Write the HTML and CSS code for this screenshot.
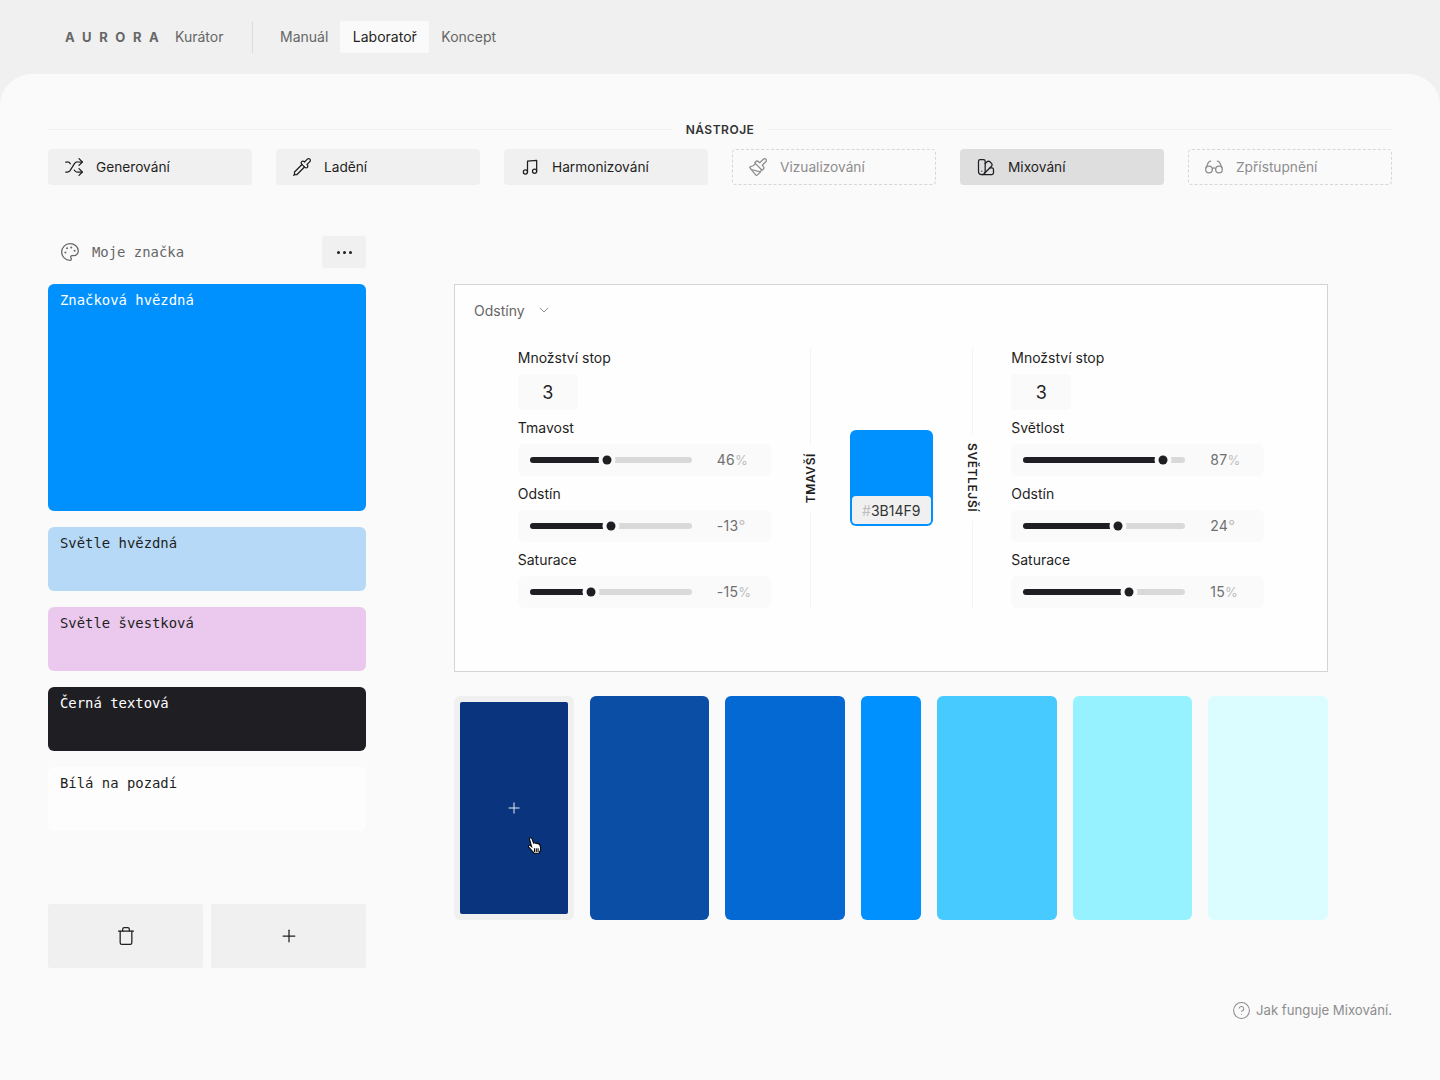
FILE: index.html
```html
<!DOCTYPE html>
<html lang="cs">
<head>
  <meta charset="UTF-8">
  <title>Aurora Kurátor - Mixování</title>
  <link rel="stylesheet" href="styles.css">
</head>
<body>

<header class="topbar">
  <span class="logo">AURORA</span>
  <span class="logo-sub">Kurátor</span>
  <span class="topbar-sep"></span>
  <nav class="nav">
    <a class="nav-item">Manuál</a>
    <a class="nav-item active">Laboratoř</a>
    <a class="nav-item">Koncept</a>
  </nav>
</header>

<main class="main">
  <div class="section-title"><span class="section-line"></span><h2>NÁSTROJE</h2><span class="section-line"></span></div>

  <div class="tools">
    <button class="tool">
      <svg class="icon" viewBox="0 0 24 24"><path d="m18 14 4 4-4 4"/><path d="m18 2 4 4-4 4"/><path d="M2 18h1.973a4 4 0 0 0 3.3-1.7l5.454-8.6a4 4 0 0 1 3.3-1.7H22"/><path d="M2 6h1.972a4 4 0 0 1 3.6 2.2"/><path d="M22 18h-6.041a4 4 0 0 1-3.3-1.8l-.359-.45"/></svg>
      Generování
    </button>
    <button class="tool">
      <svg class="icon" viewBox="0 0 24 24"><path d="m2 22 1-1h3l9-9"/><path d="M3 21v-3l9-9"/><path d="m15 6 3.4-3.4a2.1 2.1 0 1 1 3 3L18 9l.4.4a2.1 2.1 0 1 1-3 3l-3.8-3.8a2.1 2.1 0 1 1 3-3l.4.4Z"/></svg>
      Ladění
    </button>
    <button class="tool">
      <svg class="icon" viewBox="0 0 24 24"><path d="M9 18V5l11-1v13"/><circle cx="6.5" cy="18" r="2.5"/><circle cx="17.5" cy="17" r="2.5"/></svg>
      Harmonizování
    </button>
    <button class="tool disabled">
      <svg class="icon" viewBox="0 0 24 24"><path d="m14.622 17.897-10.68-2.913"/><path d="M18.376 2.622a1 1 0 1 1 3.002 3.002L17.36 9.643a.5.5 0 0 0 0 .707l.944.944a2.41 2.41 0 0 1 0 3.408l-.944.944a.5.5 0 0 1-.707 0L8.354 7.348a.5.5 0 0 1 0-.707l.944-.944a2.41 2.41 0 0 1 3.408 0l.944.944a.5.5 0 0 0 .707 0z"/><path d="M9 8c-1.804 2.71-3.97 3.46-6.583 3.948a.507.507 0 0 0-.302.819l7.32 8.883a1 1 0 0 0 1.185.204C12.735 20.405 16 16.792 16 15"/></svg>
      Vizualizování
    </button>
    <button class="tool selected">
      <svg class="icon" viewBox="0 0 24 24"><path d="M11 17a4 4 0 0 1-8 0V5a2 2 0 0 1 2-2h4a2 2 0 0 1 2 2Z"/><path d="M16.7 13H19a2 2 0 0 1 2 2v4a2 2 0 0 1-2 2H7"/><path d="M7 17h.01"/><path d="m11 8 2.3-2.3a2.4 2.4 0 0 1 3.404.004L18.6 7.6a2.4 2.4 0 0 1 .026 3.434L9.9 19.8"/></svg>
      Mixování
    </button>
    <button class="tool disabled">
      <svg class="icon" viewBox="0 0 24 24"><circle cx="6" cy="15" r="4"/><circle cx="18" cy="15" r="4"/><path d="M14 15a2 2 0 0 0-2-2 2 2 0 0 0-2 2"/><path d="M2.5 13 5 7c.7-1.3 1.4-2 3-2"/><path d="M21.5 13 19 7c-.7-1.3-1.5-2-3-2"/></svg>
      Zpřístupnění
    </button>
  </div>

  <div class="workspace">
    <aside class="brand">
      <div class="brand-head">
        <svg class="icon brand-icon" viewBox="0 0 24 24"><circle class="dot" cx="13.5" cy="6.5" r=".5"/><circle class="dot" cx="17.5" cy="10.5" r=".5"/><circle class="dot" cx="8.5" cy="7.5" r=".5"/><circle class="dot" cx="6.5" cy="12.5" r=".5"/><path d="M12 2C6.5 2 2 6.5 2 12s4.5 10 10 10c.926 0 1.648-.746 1.648-1.688 0-.437-.18-.835-.437-1.125-.29-.289-.438-.652-.438-1.125a1.64 1.64 0 0 1 1.668-1.668h1.996c3.051 0 5.555-2.503 5.555-5.554C21.965 6.012 17.461 2 12 2z"/></svg>
        <span class="brand-name">Moje značka</span>
        <button class="more"><i></i><i></i><i></i></button>
      </div>

      <div class="color-card big card-star">Značková hvězdná</div>
      <div class="color-card card-light">Světle hvězdná</div>
      <div class="color-card card-plum">Světle švestková</div>
      <div class="color-card card-black">Černá textová</div>
      <div class="color-card card-white">Bílá na pozadí</div>

      <div class="brand-actions">
        <button class="action">
          <svg class="icon" viewBox="0 0 24 24"><path d="M3 6h18"/><path d="M19 6v14c0 1-1 2-2 2H7c-1 0-2-1-2-2V6"/><path d="M8 6V4c0-1 1-2 2-2h4c1 0 2 1 2 2v2"/></svg>
        </button>
        <button class="action">
          <svg class="icon" viewBox="0 0 24 24"><path d="M5 12h14"/><path d="M12 5v14"/></svg>
        </button>
      </div>
    </aside>

    <section class="mixer">
      <div class="panel">
        <div class="panel-head">
          Odstíny
          <svg class="chevron" viewBox="0 0 24 24"><path d="m6 9 6 6 6-6"/></svg>
        </div>

        <div class="panel-body">
          <div class="group">
            <div class="field-label">Množství stop</div>
            <div class="stepper">3</div>
            <div class="field-label">Tmavost</div>
            <div class="slider">
              <div class="track"><div class="fill" style="width:47.5%"></div><div class="thumb" style="left:47.5%"></div></div>
              <span class="value">46<em>%</em></span>
            </div>
            <div class="field-label">Odstín</div>
            <div class="slider">
              <div class="track"><div class="fill" style="width:50%"></div><div class="thumb" style="left:50%"></div></div>
              <span class="value">-13<em class="deg">°</em></span>
            </div>
            <div class="field-label">Saturace</div>
            <div class="slider">
              <div class="track"><div class="fill" style="width:37.6%"></div><div class="thumb" style="left:37.6%"></div></div>
              <span class="value">-15<em>%</em></span>
            </div>
          </div>

          <div class="divider">
            <span class="divider-line"></span>
            <span class="divider-label flip">TMAVŠÍ</span>
            <span class="divider-line"></span>
          </div>

          <div class="base">
            <div class="base-hex"><em>#</em>3B14F9</div>
          </div>

          <div class="divider after-base">
            <span class="divider-line"></span>
            <span class="divider-label">SVĚTLEJŠÍ</span>
            <span class="divider-line"></span>
          </div>

          <div class="group">
            <div class="field-label">Množství stop</div>
            <div class="stepper">3</div>
            <div class="field-label">Světlost</div>
            <div class="slider">
              <div class="track"><div class="fill" style="width:86.5%"></div><div class="thumb" style="left:86.5%"></div></div>
              <span class="value">87<em>%</em></span>
            </div>
            <div class="field-label">Odstín</div>
            <div class="slider">
              <div class="track"><div class="fill" style="width:58.2%"></div><div class="thumb" style="left:58.2%"></div></div>
              <span class="value">24<em class="deg">°</em></span>
            </div>
            <div class="field-label">Saturace</div>
            <div class="slider">
              <div class="track"><div class="fill" style="width:65.5%"></div><div class="thumb" style="left:65.5%"></div></div>
              <span class="value">15<em>%</em></span>
            </div>
          </div>
        </div>
      </div>

      <div class="shades">
        <div class="shade hovered">
          <div class="shade-inner">
            <svg class="shade-plus" viewBox="0 0 12 12"><path d="M.5 6h11"/><path d="M6 .5v11"/></svg>
            <svg class="cursor" viewBox="0 0 15 16"><path d="M3 .8c.7-.3 1.300 0 1.600.7l1.600 4.200c.5-.4 1.200-.3 1.500.2.5-.4 1.200-.2 1.500.3.5-.3 1.200-.1 1.500.4.5-.2 1 0 1.200.5l.8 2.500c.5 1.800 0 3.400-1 4.500l-.3 1.200H6.400l-.5-1L1.600 9.500c-.5-.6-.4-1.300.1-1.600.5-.3 1.100-.2 1.500.2l1.100 1L2.400 2.300c-.2-.6 0-1.200.6-1.500z"/><path class="cursor-lines" d="M7 10.500v3.500M8.700 10.500v3.500M10.400 10.500v3.500"/></svg>
          </div>
        </div>
        <div class="shade s2"></div>
        <div class="shade s3"></div>
        <div class="shade base-shade"></div>
        <div class="shade s5"></div>
        <div class="shade s6"></div>
        <div class="shade s7"></div>
      </div>
    </section>
  </div>

  <div class="help">
    <svg class="icon help-icon" viewBox="0 0 24 24"><circle cx="12" cy="12" r="10"/><path d="M9.090 9a3 3 0 0 1 5.830 1c0 2-3 3-3 3"/><path d="M12 17h.01"/></svg>
    Jak funguje Mixování.
  </div>
</main>

</body>
</html>
```

FILE: styles.css
```css
* {
  box-sizing: border-box;
}
html, body {
  height: 100%;
}
body {
  margin: 0;
  display: flex;
  flex-direction: column;
  background: #f0f0f0;
  color: #1f1f23;
  font-family: Inter, "Noto Sans", sans-serif;
  font-size: 14px;
}
button {
  font: inherit;
  color: inherit;
  border: none;
  cursor: pointer;
}
em {
  font-style: normal;
}
.icon {
  width: 20px;
  height: 20px;
  flex: none;
  fill: none;
  stroke: currentColor;
  stroke-width: 1.5;
  stroke-linecap: round;
  stroke-linejoin: round;
}

/* top bar */
.topbar {
  height: 74px;
  flex: none;
  display: flex;
  align-items: center;
  padding-left: 65px;
}
.logo {
  width: 110px;
  line-height: 32px;
  font-size: 13px;
  font-weight: 700;
  letter-spacing: 7.6px;
  color: #666;
}
.logo-sub {
  color: #666;
  width: 77px;
  line-height: 32px;
}
.topbar-sep {
  width: 1px;
  height: 32px;
  background: #dcdcdc;
  margin-right: 15px;
}
.nav {
  display: flex;
}
.nav-item {
  height: 32px;
  line-height: 32px;
  padding: 0 12px;
  border-radius: 2px;
  color: #666;
}
.nav-item.active {
  width: 89px;
  background: #fafafa;
  color: #1f1f23;
  text-align: center;
}

/* main sheet */
.main {
  flex: 1;
  background: #fafafa;
  border-radius: 32px 32px 0 0;
  padding: 47px 48px 0;
}
.section-title {
  display: flex;
  align-items: center;
  height: 16px;
}
.section-title h2 {
  margin: 0;
  padding: 0 14px;
  font-size: 12px;
  font-weight: 600;
  letter-spacing: .5px;
  color: #333;
}
.section-line {
  flex: 1;
  height: 1px;
  background: #f0f0f0;
}
.tools {
  display: grid;
  grid-template-columns: repeat(6, 1fr);
  gap: 24px;
  margin-top: 12px;
}
.tool {
  height: 36px;
  display: flex;
  align-items: center;
  gap: 12px;
  padding: 0 16px;
  background: #f0f0f0;
  border-radius: 4px;
  font-size: 13.7px;
  text-align: left;
}
.tool.selected {
  background: #dedede;
}
.tool.disabled {
  padding-left: 15px;
  background: none;
  border: 1px dashed #d6d6d6;
  color: #8d8d8d;
}

.workspace {
  display: flex;
  gap: 88px;
  margin-top: 51px;
}

/* brand colours */
.brand {
  width: 318px;
  flex: none;
}
.brand-head {
  display: flex;
  align-items: center;
  height: 32px;
  padding-left: 12px;
  margin-bottom: 16px;
  color: #666;
}
.brand-name {
  flex: 1;
  margin-left: 12px;
  font-family: "DejaVu Sans Mono", "Liberation Mono", monospace;
  font-size: 13.9px;
}
.more {
  width: 44px;
  height: 32px;
  display: flex;
  align-items: center;
  justify-content: center;
  gap: 3px;
  background: #f0f0f0;
  border-radius: 2px;
}
.more i {
  width: 3px;
  height: 3px;
  border-radius: 50%;
  background: #1f1f23;
}
.dot {
  fill: currentColor;
}
.color-card {
  height: 64px;
  margin-bottom: 16px;
  padding: 7px 12px;
  border-radius: 6px;
  font-family: "DejaVu Sans Mono", "Liberation Mono", monospace;
  font-size: 13.9px;
  line-height: 18px;
}
.color-card.big {
  height: 227px;
}
.card-star {
  background: #0091ff;
  color: #fff;
}
.card-light {
  background: #b5d9f7;
}
.card-plum {
  background: #ebc9ee;
}
.card-black {
  background: #1f1f23;
  color: #fff;
}
.card-white {
  background: #fdfdfd;
}
.brand-actions {
  display: flex;
  gap: 8px;
  margin-top: 73px;
}
.action {
  flex: 1;
  height: 64px;
  display: flex;
  align-items: center;
  justify-content: center;
  background: #f0f0f0;
  border-radius: 2px;
}

/* mixer */
.mixer {
  width: 874px;
  margin-top: 48px;
}
.panel {
  height: 388px;
  background: #fefefe;
  border: 1px solid #d4d4d4;
}
.panel-head {
  display: flex;
  align-items: center;
  gap: 11px;
  height: 20px;
  margin: 15px 0 0 19px;
  color: #666;
}
.chevron {
  width: 16px;
  height: 16px;
  fill: none;
  stroke: #8a93a3;
  stroke-width: 1.5;
  stroke-linecap: round;
  stroke-linejoin: round;
}
.panel-body {
  display: flex;
  justify-content: center;
  margin-top: 28px;
}
.group {
  width: 253px;
}
.field-label {
  height: 20px;
  line-height: 20px;
  margin-bottom: 6px;
}
.stepper {
  width: 60px;
  height: 36px;
  margin-bottom: 8px;
  background: #fafafa;
  border-radius: 4px;
  text-align: center;
  line-height: 37px;
  font-size: 18px;
}
.slider {
  height: 32px;
  margin-bottom: 8px;
  display: flex;
  align-items: center;
  padding-left: 12px;
  background: #fafafa;
  border-radius: 6px;
}
.slider:last-child {
  margin-bottom: 0;
}
.track {
  position: relative;
  width: 162px;
  height: 6px;
  background: #d9d9d9;
  border-radius: 3px;
}
.fill {
  height: 100%;
  background: #1f1f23;
  border-radius: 3px;
}
.thumb {
  position: absolute;
  top: 50%;
  width: 9px;
  height: 9px;
  border-radius: 50%;
  background: #1f1f23;
  box-shadow: 0 0 0 4px #fafafa;
  transform: translate(-50%, -50%);
}
.value {
  margin-left: 25px;
  line-height: 20px;
  margin-top: -1px;
  color: #707070;
  letter-spacing: .3px;
}
.value em {
  color: #bdbdbd;
  font-size: 13px;
  letter-spacing: 0;
}
.value .deg {
  font-size: 15px;
}
.divider {
  width: 1px;
  margin: 0 39px;
  display: flex;
  flex-direction: column;
  align-items: center;
}
.divider.after-base {
  margin-right: 38.5px;
}
.divider-line {
  flex: 1;
  width: 1px;
  background: #f4f4f4;
}
.divider-label {
  writing-mode: vertical-rl;
  padding: 8px 0;
  font-size: 12px;
  font-weight: 600;
  letter-spacing: .6px;
  color: #1f1f23;
}
.divider-label.flip {
  transform: rotate(180deg);
}
.base {
  width: 83px;
  height: 96px;
  margin-top: 82px;
  padding: 2px;
  display: flex;
  align-items: flex-end;
  background: #0091ff;
  border-radius: 6px;
}
.base-hex {
  width: 100%;
  height: 28px;
  line-height: 29px;
  background: #f0f0f0;
  border-radius: 4px;
  text-align: center;
  color: #333;
}
.base-hex em {
  color: #bdbdbd;
}

/* generated shades */
.shades {
  display: grid;
  grid-template-columns: 1fr 1fr 1fr 60px 1fr 1fr 1fr;
  gap: 16px;
  height: 224px;
  margin-top: 24px;
}
.shade {
  border-radius: 6px;
}
.shade.hovered {
  padding: 6px;
  background: #f0f0f0;
}
.shade-inner {
  position: relative;
  height: 100%;
  display: flex;
  align-items: center;
  justify-content: center;
  background: #0a347e;
  border-radius: 2px;
}
.shade-plus {
  width: 12px;
  height: 12px;
  fill: none;
  stroke: #c7d0e3;
  stroke-width: 1.2;
}
.cursor {
  position: absolute;
  left: 67px;
  top: 135px;
  width: 16px;
  height: 17px;
  fill: #fff;
  stroke: #000;
  stroke-width: 1;
}
.cursor-lines {
  fill: none;
}
.s2 {
  background: #0a4ea6;
}
.s3 {
  background: #0569d4;
}
.base-shade {
  background: #0091ff;
}
.s5 {
  background: #47caff;
}
.s6 {
  background: #97f2ff;
}
.s7 {
  background: #dbfdff;
}

.help {
  display: flex;
  align-items: center;
  justify-content: flex-end;
  gap: 5px;
  margin-top: 32px;
  height: 20px;
  font-size: 13.2px;
  color: #8d8d8d;
}
.help-icon {
  width: 19px;
  height: 19px;
  stroke-width: 1.3;
}
```
